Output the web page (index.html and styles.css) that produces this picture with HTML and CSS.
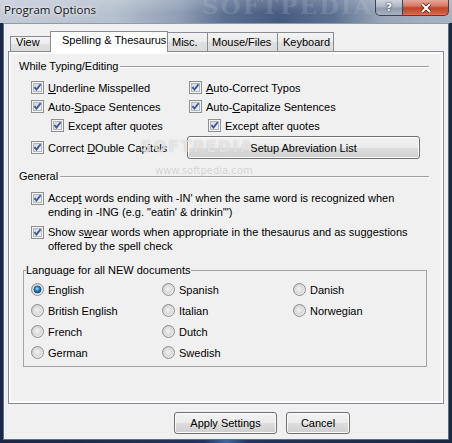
FILE: index.html
```html
<!DOCTYPE html>
<html>
<head>
<meta charset="utf-8">
<link rel="stylesheet" href="styles.css">
</head>
<body>
<svg class="defs" width="0" height="0">
  <defs>
    <linearGradient id="cbg" x1="0" y1="0" x2="1" y2="1">
      <stop offset="0" stop-color="#cfd2d7"/>
      <stop offset="1" stop-color="#f7f7f7"/>
    </linearGradient>
    <linearGradient id="rbg" x1="0" y1="0" x2="1" y2="1">
      <stop offset="0" stop-color="#c9c9c9"/>
      <stop offset="1" stop-color="#f4f4f4"/>
    </linearGradient>
    <radialGradient id="rin" cx="0.45" cy="0.45" r="0.6">
      <stop offset="0" stop-color="#f2f2f2"/>
      <stop offset="1" stop-color="#d4d4d4"/>
    </radialGradient>
    <radialGradient id="dot" cx="0.45" cy="0.4" r="0.6">
      <stop offset="0" stop-color="#a8e4ff"/>
      <stop offset="0.45" stop-color="#2a8fd6"/>
      <stop offset="1" stop-color="#0b3c78"/>
    </radialGradient>
    <symbol id="cb" viewBox="0 0 13 13">
      <rect x="0.5" y="0.5" width="12" height="12" fill="#f4f4f4" stroke="#8e8f8f"/>
      <rect x="2.5" y="2.5" width="8" height="8" fill="url(#cbg)" stroke="#b3b7bd"/>
      <path d="M3.4 6.2 L5.5 8.6 L9.6 3.2" fill="none" stroke="#3b5a9a" stroke-width="1.9"/>
    </symbol>
    <symbol id="rd" viewBox="0 0 13 13">
      <circle cx="6.5" cy="6.5" r="6" fill="url(#rbg)" stroke="#8e8f8f"/>
      <circle cx="6.5" cy="6.5" r="4.2" fill="url(#rin)"/>
    </symbol>
    <symbol id="rds" viewBox="0 0 13 13">
      <circle cx="6.5" cy="6.5" r="6" fill="url(#rbg)" stroke="#8e8f8f"/>
      <circle cx="6.5" cy="6.5" r="3.6" fill="url(#dot)" stroke="#1a3f6e" stroke-width="0.6"/>
    </symbol>
  </defs>
</svg>

<div class="titlebar">
  <span class="title">Program Options</span>
  <span class="wm-title">SOFTPEDIA</span>
  <div class="capbtns">
    <span class="cap help">?</span>
    <span class="cap close">
      <svg width="12" height="10" viewBox="0 0 12 10">
        <path d="M2 1 L10 9 M10 1 L2 9" stroke="#5a2216" stroke-width="3.8"/>
        <path d="M2 1 L10 9 M10 1 L2 9" stroke="#ffffff" stroke-width="2"/>
      </svg>
    </span>
  </div>
</div>

<div class="client">
  <div class="tabs">
    <div class="tab t-view">View</div>
    <div class="tab sel">Spelling &amp; Thesaurus</div>
    <div class="tab t-misc">Misc.</div>
    <div class="tab t-mouse">Mouse/Files</div>
    <div class="tab t-kb">Keyboard</div>
  </div>

  <div class="panel">
    <div class="sec-head"><span>While Typing/Editing</span><span class="rule"></span></div>
    <div class="opts">
      <label class="cbx"><svg><use href="#cb"/></svg><span><u>U</u>nderline Misspelled</span></label>
      <label class="cbx"><svg><use href="#cb"/></svg><span><u>A</u>uto-Correct Typos</span></label>
      <label class="cbx"><svg><use href="#cb"/></svg><span>Auto-<u>S</u>pace Sentences</span></label>
      <label class="cbx"><svg><use href="#cb"/></svg><span>Auto-<u>C</u>apitalize Sentences</span></label>
      <label class="cbx ind"><svg><use href="#cb"/></svg><span>Except after quotes</span></label>
      <label class="cbx ind2"><svg><use href="#cb"/></svg><span>Except after quotes</span></label>
      <label class="cbx r4l"><svg><use href="#cb"/></svg><span>Correct <u>D</u>Ouble Capitals</span></label>
      <div class="btn setup">Setup Abreviation List</div>
    </div>

    <div class="sec-head gen"><span>General</span><span class="rule"></span></div>
    <label class="para p1"><svg><use href="#cb"/></svg><span>Accep<u>t</u> words ending with -IN' when the same word is recognized when<br>ending in -ING (e.g. "eatin' &amp; drinkin'")</span></label>
    <label class="para p2"><svg><use href="#cb"/></svg><span>Show s<u>w</u>ear words when appropriate in the thesaurus and as suggestions<br>offered by the spell check</span></label>

    <div class="group">
      <div class="glabel">Language for all NEW documents</div>
      <div class="radios">
        <label class="rdo"><svg><use href="#rds"/></svg><span>English</span></label>
        <label class="rdo"><svg><use href="#rd"/></svg><span>British English</span></label>
        <label class="rdo"><svg><use href="#rd"/></svg><span>French</span></label>
        <label class="rdo"><svg><use href="#rd"/></svg><span>German</span></label>
        <label class="rdo"><svg><use href="#rd"/></svg><span>Spanish</span></label>
        <label class="rdo"><svg><use href="#rd"/></svg><span>Italian</span></label>
        <label class="rdo"><svg><use href="#rd"/></svg><span>Dutch</span></label>
        <label class="rdo"><svg><use href="#rd"/></svg><span>Swedish</span></label>
        <label class="rdo"><svg><use href="#rd"/></svg><span>Danish</span></label>
        <label class="rdo"><svg><use href="#rd"/></svg><span>Norwegian</span></label>
      </div>
    </div>
  </div>

  <div class="actions">
    <div class="btn apply">Apply Settings</div>
    <div class="btn cancel">Cancel</div>
  </div>
</div>

<div class="wm-mid">SOFTPEDIA</div>
<div class="wm-url">www.softpedia.com</div>
</body>
</html>
```

FILE: styles.css
```css
* { box-sizing: border-box; }
html, body { margin: 0; padding: 0; }
body {
  width: 452px;
  height: 443px;
  overflow: hidden;
  position: relative;
  background: linear-gradient(90deg, #1b2843 0%, #24345a 45%, #3b6a9c 50%, #24345a 55%, #1b2843 100%);
  font-family: "Liberation Sans", Arial, sans-serif;
  font-size: 11px;
  color: #000;
}
.defs { display: block; width: 0; height: 0; overflow: hidden; }

/* ---------- title bar ---------- */
.titlebar {
  position: relative;
  height: 23px;
  display: flex;
  align-items: flex-start;
  overflow: hidden;
  background:
    linear-gradient(180deg, rgba(255,255,255,0.18), rgba(255,255,255,0) 60%),
    linear-gradient(90deg, #c3cbd7 0%, #b6c0ce 25%, #8e9db4 40%, #5a6e90 50%, #465b80 62%, #5d7192 74%, #98a5b8 84%, #a9b3c2 100%);
}
.title {
  font-family: "Open Sans", "Liberation Sans", sans-serif;
  font-size: 11.5px;
  line-height: 20px;
  padding-left: 4px;
  color: #141414;
  text-shadow: 0 0 6px rgba(255,255,255,0.9), 0 0 3px rgba(255,255,255,0.7);
  white-space: nowrap;
}
.wm-title {
  position: absolute;
  left: 202px;
  top: -8px;
  font-family: "DejaVu Serif", serif;
  font-weight: bold;
  font-size: 23px;
  letter-spacing: 2px;
  color: rgba(215,225,240,0.16);
  white-space: nowrap;
  pointer-events: none;
}
.capbtns {
  margin-left: auto;
  margin-right: 3px;
  display: flex;
  height: 16px;
  position: relative;
  z-index: 1;
}
.cap {
  height: 16px;
  display: flex;
  align-items: center;
  justify-content: center;
  border: 1px solid #38445a;
  border-top: none;
  color: #fff;
}
.help {
  width: 28px;
  border-radius: 0 0 0 5px;
  background: linear-gradient(180deg, #cdd4de 0%, #aab4c3 48%, #8f9bae 52%, #a6b1c1 100%);
  font-family: "DejaVu Sans", sans-serif;
  font-weight: bold;
  font-size: 11px;
  line-height: 14px;
  text-shadow: 0 0 2px #2a3446, 0 0 1px #2a3446;
}
.close {
  width: 47px;
  margin-left: -1px;
  border-radius: 0 0 5px 0;
  background: linear-gradient(180deg, #e6a797 0%, #d67a66 40%, #c2432b 52%, #cf5a3c 85%, #e07a55 100%);
}
.close svg { display: block; }

/* ---------- client ---------- */
.client {
  margin: 0 3px;
  height: 417px;
  background: #f0f0f0;
  border: 1px solid #5e6d87;
  border-top-color: #8e9aae;
  padding-top: 7px;
  display: flex;
  flex-direction: column;
}

/* ---------- tabs ---------- */
.tabs {
  display: flex;
  align-items: flex-end;
  height: 20px;
  padding-left: 6px;
}
.tab {
  height: 19px;
  margin-left: -1px;
  border: 1px solid #898c95;
  border-bottom: none;
  background: linear-gradient(180deg, #f3f3f3 0%, #ebebeb 50%, #e0e0e0 51%, #dadada 100%);
  display: flex;
  align-items: flex-end;
  padding: 0 0 2px 4px;
  line-height: 14px;
  white-space: nowrap;
}
.t-view { height: 15px; width: 41px; margin-left: 0; padding-left: 5px; }
.t-misc { width: 41px; }
.t-mouse { width: 71px; }
.t-kb { width: 57px; padding-left: 5px; }
.sel {
  height: 21px;
  width: 118px;
  margin-bottom: -1px;
  background: #fff;
  z-index: 2;
  padding-left: 11px;
  padding-bottom: 5px;
}

/* ---------- panel ---------- */
.panel {
  margin-left: 4px;
  width: 436px;
  height: 353px;
  border: 1px solid #898c95;
  background: #f0f0f0;
  box-shadow: inset 0 0 0 2px #fbfbfb;
  padding: 7px 14px 0 10px;
}
.sec-head {
  display: flex;
  align-items: center;
  height: 14px;
  line-height: 14px;
  white-space: nowrap;
}
.sec-head .rule {
  flex: 1;
  height: 1px;
  margin-left: 2px;
  background: #a0a0a0;
  box-shadow: 0 1px 0 #ffffff;
}
.gen { margin-top: 9px; }

.opts {
  display: grid;
  grid-template-columns: 158px 1fr;
  grid-template-rows: 19px 19px 19px 25px;
  margin: 5px 0 0 12px;
}
.cbx {
  display: flex;
  align-items: center;
  gap: 4px;
  white-space: nowrap;
  height: 19px;
}
.cbx svg, .para svg, .rdo svg { flex: none; width: 13px; height: 13px; }
.ind { padding-left: 20px; }
.ind2 { padding-left: 19px; }
.r4l { align-self: end; margin-bottom: 3px; }

.btn {
  display: flex;
  align-items: center;
  justify-content: center;
  border: 1px solid #707070;
  border-radius: 3px;
  background: linear-gradient(180deg, #f2f2f2 0%, #ebebeb 50%, #dddddd 51%, #cfcfcf 100%);
  box-shadow: inset 0 0 0 1px #fbfbfb;
  white-space: nowrap;
}
.setup {
  align-self: end;
  width: 233px;
  height: 23px;
  margin-left: -2px;
  margin-bottom: 1px;
}

.para {
  display: flex;
  align-items: flex-start;
  gap: 4px;
  margin-left: 12px;
  line-height: 14px;
  white-space: nowrap;
}
.para svg { margin-top: 1px; }
.p1 { margin-top: 8px; }
.p2 { margin-top: 6px; }

.group {
  margin: 17px 0 0 4px;
  width: 404px;
  height: 97px;
  border: 1px solid #a5a5a5;
}
.glabel {
  display: block;
  width: max-content;
  margin: -8px 0 0 2px;
  padding-right: 1px;
  line-height: 14px;
  background: #f0f0f0;
}
.radios {
  display: grid;
  grid-template-columns: 131px 131px 1fr;
  grid-template-rows: repeat(4, 21px);
  grid-auto-flow: column;
  margin: 2px 0 0 7px;
}
.rdo {
  display: flex;
  align-items: center;
  gap: 4px;
  white-space: nowrap;
}

/* ---------- bottom buttons ---------- */
.actions {
  display: flex;
  gap: 9px;
  margin-top: 8px;
  padding-left: 170px;
}
.apply { width: 103px; height: 22px; }
.cancel { width: 64px; height: 22px; }

/* ---------- watermarks ---------- */
.wm-mid {
  position: absolute;
  left: 141px;
  top: 138px;
  font-family: "DejaVu Sans", sans-serif;
  font-weight: bold;
  font-size: 15px;
  letter-spacing: 2px;
  color: rgba(255,255,255,0.6);
  text-shadow: 0 0 1px rgba(150,150,150,0.6);
  pointer-events: none;
  white-space: nowrap;
}
.wm-url {
  position: absolute;
  left: 155px;
  top: 165px;
  font-family: "DejaVu Sans", sans-serif;
  font-size: 10px;
  color: rgba(190,190,190,0.7);
  text-shadow: 0 0 1px #fff;
  pointer-events: none;
  white-space: nowrap;
}
```
